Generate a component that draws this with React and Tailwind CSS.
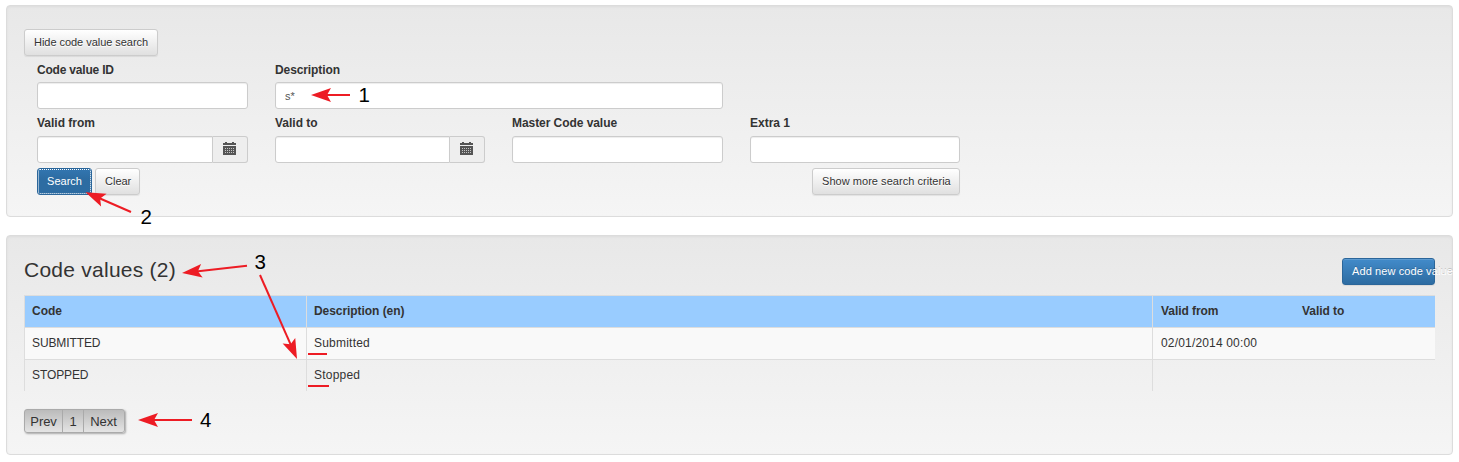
const PANEL =
  "rounded-[4px] border border-[#dcdcdc] bg-linear-to-b from-[#e8e8e8] to-[#f5f5f5] shadow-[inset_0_1px_3px_rgba(0,0,0,0.05),0_1px_0_rgba(255,255,255,0.1)]";
const INPUT =
  "h-[27px] border border-[#ccc] bg-white px-[9px] text-[11px] text-[#555] shadow-[inset_0_1px_1px_rgba(0,0,0,0.075)] outline-none";
const BUTTON =
  "h-[27px] rounded-[3px] border px-[9px] text-[11px] leading-[25px] whitespace-nowrap";
const LIGHT =
  "border-[#ccc] bg-linear-to-b from-white to-[#e0e0e0] text-[#333] [text-shadow:0_1px_0_#fff] shadow-[inset_0_1px_0_rgba(255,255,255,0.15),0_1px_1px_rgba(0,0,0,0.075)]";

function CalendarIcon() {
  return (
    <svg width="13" height="13" viewBox="0 0 13 13" shapeRendering="crispEdges">
      <path fill="#555" d="M0 1h2V0h2v1h5V0h2v1h2v2H0z" />
      <path fill="#555" d="M0 4h13v9H0z" />
      <path
        stroke="#c4c4c4"
        strokeWidth="1"
        strokeDasharray="1 1"
        d="M2 6.5h10M2 8.5h10M2 10.5h10"
      />
    </svg>
  );
}

function Label({ children, className = "h-[21px]" }) {
  return <span className={`text-[12px] leading-[17px] font-bold ${className}`}>{children}</span>;
}

function Field({ label, value = "", width = "w-[211px]", labelClass }) {
  return (
    <label className={`flex flex-col ${width}`}>
      <Label className={labelClass}>{label}</Label>
      <input className={`${INPUT} w-full rounded-[3px]`} defaultValue={value} />
    </label>
  );
}

function DateField({ label, width = "w-[211px]" }) {
  return (
    <label className={`flex flex-col ${width}`}>
      <Label>{label}</Label>
      <span className="flex">
        <input className={`${INPUT} min-w-0 flex-1 rounded-l-[3px]`} />
        <span className="flex h-[27px] w-[35px] justify-center rounded-r-[3px] border border-l-0 border-[#ccc] bg-[#eee] pt-[5px] pr-[2px]">
          <CalendarIcon />
        </span>
      </span>
    </label>
  );
}

function Arrow({ tail, tip }) {
  const dx = tail[0] - tip[0];
  const dy = tail[1] - tip[1];
  const length = Math.hypot(dx, dy);
  const angle = (Math.atan2(dy, dx) * 180) / Math.PI;
  return (
    <g transform={`translate(${tip[0]} ${tip[1]}) rotate(${angle})`}>
      <path d={`M14 0H${length}`} stroke="#ed1c24" strokeWidth="2" />
      <path d="M0 0L20 -6.9L16 0L20 6.9z" fill="#ed1c24" />
    </g>
  );
}

function Annotations() {
  return (
    <svg
      className="pointer-events-none absolute top-0 left-0"
      width="1459"
      height="462"
      viewBox="0 0 1459 462"
    >
      <Arrow tip={[311, 95]} tail={[350, 95]} />
      <Arrow tip={[85.5, 192.2]} tail={[131, 212]} />
      <Arrow tip={[182, 273]} tail={[247, 265.7]} />
      <Arrow tip={[297, 359]} tail={[260, 275]} />
      <Arrow tip={[138, 420]} tail={[192, 420]} />
      <path d="M308 354h19M308 386h21" stroke="#ed1c24" strokeWidth="2" />
      <g fill="#000" fontSize="20.5" className="font-['Liberation_Sans',Arial,sans-serif]">
        <text x="358.5" y="102">1</text>
        <text x="140.5" y="224">2</text>
        <text x="254.5" y="269">3</text>
        <text x="200" y="427">4</text>
      </g>
    </svg>
  );
}

const ROWS = [
  { code: "SUBMITTED", description: "Submitted", from: "02/01/2014 00:00", to: "", bg: "bg-[#f9f9f9]" },
  { code: "STOPPED", description: "Stopped", from: "", to: "", bg: "" },
];

export default function App() {
  return (
    <div className="relative h-[462px] w-[1459px] overflow-hidden bg-white px-[6px] pt-[5px] font-['Liberation_Sans',Arial,sans-serif] text-[12px] text-[#333]">
      <section className={`${PANEL} h-[212px] w-[1447px] px-[17px] pt-[23px]`}>
        <button className={`${BUTTON} ${LIGHT} block w-[134px] tracking-[-0.04px]`}>
          Hide code value search
        </button>
        <div className="ml-[13px] w-[923px] pt-[6px]">
          <div className="flex gap-[27px]">
            <Field label="Code value ID" labelClass="h-[20px] tracking-[-0.2px]" />
            <Field
              label="Description"
              labelClass="h-[20px] tracking-[-0.1px]"
              value="s*"
              width="w-[448px]"
            />
          </div>
          <div className="mt-[6px] grid grid-cols-[238px_237px_238px_210px]">
            <DateField label="Valid from" />
            <DateField label="Valid to" width="w-[210px]" />
            <Field label="Master Code value" labelClass="h-[21px] tracking-[-0.06px]" />
            <Field label="Extra 1" width="w-[210px]" />
          </div>
          <div className="mt-[5px] flex">
            <button
              className={`${BUTTON} w-[55px] border-[#2b669a] bg-linear-to-b from-[#3276b1] to-[#2d6ca2] to-40% text-white outline-1 -outline-offset-2 outline-dotted outline-white`}
            >
              Search
            </button>
            <button className={`${BUTTON} ${LIGHT} ml-[3px] w-[45px]`}>Clear</button>
            <button className={`${BUTTON} ${LIGHT} ml-auto w-[148px] tracking-[0.04px]`}>
              Show more search criteria
            </button>
          </div>
        </div>
      </section>

      <section className={`${PANEL} mt-[18px] h-[220px] w-[1447px] px-[17px] pt-[22px]`}>
        <div className="flex h-[37px] justify-between">
          <h1 className="text-[21px] leading-[24px] tracking-[0.25px]">Code values (2)</h1>
          <button
            className={`${BUTTON} w-[93px] border-[#2b669a] bg-linear-to-b from-[#428bca] to-[#2d6ca2] text-left tracking-[0.1px] text-white shadow-[inset_0_1px_0_rgba(255,255,255,0.15),0_1px_1px_rgba(0,0,0,0.075)] [text-shadow:0_-1px_0_rgba(0,0,0,0.2)]`}
          >
            Add new code value
          </button>
        </div>
        <table className="h-[96px] w-[1411px] table-fixed border-separate border-spacing-0 text-left leading-[16px]">
          <colgroup>
            <col className="w-[282px]" />
            <col className="w-[846px]" />
            <col className="w-[141px]" />
            <col className="w-[142px]" />
          </colgroup>
          <thead>
            <tr className="h-[32px] bg-[#99ccff]">
              <th className="border-t border-l border-[#ddd] px-[7px] pb-[2px]">Code</th>
              <th className="border-t border-l border-[#ddd] px-[7px] pb-[2px] tracking-[-0.06px]">
                Description (en)
              </th>
              <th className="border-t border-l border-[#ddd] px-[8px] pb-[2px] tracking-[-0.06px]">
                Valid from
              </th>
              <th className="border-t border-[#ddd] px-[9px] pb-[2px] tracking-[-0.06px]">
                Valid to
              </th>
            </tr>
          </thead>
          <tbody>
            {ROWS.map((row) => (
              <tr key={row.code} className={`h-[32px] ${row.bg}`}>
                <td className="border-t border-l border-[#ddd] px-[7px] pb-[2px] tracking-[-0.1px]">
                  {row.code}
                </td>
                <td className="border-t border-l border-[#ddd] px-[7px] pb-[2px] tracking-[0.22px]">
                  {row.description}
                </td>
                <td className="border-t border-l border-[#ddd] px-[8px] pb-[2px] tracking-[0.17px]">
                  {row.from}
                </td>
                <td className="border-t border-[#ddd] px-[9px] pb-[2px]">{row.to}</td>
              </tr>
            ))}
          </tbody>
        </table>
        <nav className="mt-[18px] flex h-[24px] w-[101px] rounded-[3px] border border-[#aaa] bg-linear-to-b from-[#bbb] to-[#e4e4e4] text-center text-[13px] leading-[23px] tracking-[-0.1px] shadow-[1px_1px_2px_rgba(0,0,0,0.3)]">
          <a className="w-[38px] border-r border-[#aaa]">Prev</a>
          <a className="w-[21px] border-r border-[#aaa]">1</a>
          <a className="w-[40px] pr-px">Next</a>
        </nav>
      </section>
      <Annotations />
    </div>
  );
}
